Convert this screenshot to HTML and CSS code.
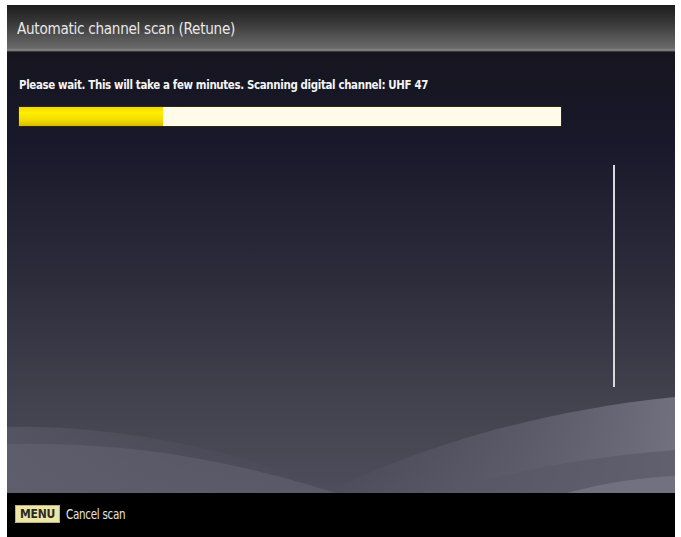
FILE: index.html
```html
<!DOCTYPE html>
<html>
<head>
<meta charset="utf-8">
<link rel="stylesheet" href="styles.css">
</head>
<body>
<div class="screen">
  <div class="titlebar"><span class="title">Automatic channel scan (Retune)</span></div>
  <div class="content">
    <svg class="waves" viewBox="0 0 668 441" preserveAspectRatio="none" aria-hidden="true">
      <defs>
        <linearGradient id="w1" x1="0" y1="0" x2="1" y2="0">
          <stop offset="0" stop-color="#6a6a78" stop-opacity="0.0"/>
          <stop offset="0.5" stop-color="#6e6d7c" stop-opacity="0.45"/>
          <stop offset="1" stop-color="#7c7b8a" stop-opacity="0.8"/>
        </linearGradient>
        <linearGradient id="w2" x1="0" y1="0" x2="1" y2="0">
          <stop offset="0" stop-color="#5a5a68" stop-opacity="0.7"/>
          <stop offset="0.6" stop-color="#5a5a68" stop-opacity="0.2"/>
          <stop offset="1" stop-color="#5a5a68" stop-opacity="0"/>
        </linearGradient>
      </defs>
      <path d="M0 375 C120 372 260 405 320 441 L0 441 Z" fill="url(#w2)"/>
      <path d="M0 392 C150 388 260 420 330 441 L0 441 Z" fill="#666674" opacity="0.5"/>
      <path d="M320 441 C400 400 520 360 668 345 L668 441 Z" fill="url(#w1)"/>
      <path d="M430 441 C500 420 580 405 668 398 L668 441 Z" fill="#585766" opacity="0.65"/>
      <path d="M560 441 C600 430 640 425 668 424 L668 441 Z" fill="#767584" opacity="0.8"/>
    </svg>
    <div class="main">
      <p class="message">Please wait. This will take a few minutes. Scanning digital channel: UHF 47</p>
      <div class="progress"><div class="fill" style="width:26.6%"></div></div>
    </div>
    <div class="side"><div class="vline"></div></div>
  </div>
  <div class="footer">
    <span class="key">MENU</span><span class="action">Cancel scan</span>
  </div>
</div>
</body>
</html>
```
FILE: styles.css
```css
html, body {
  margin: 0;
  padding: 0;
  background: #ffffff;
}
.screen {
  margin: 5px 6px 0 7px;
  width: 668px;
  height: 532px;
  display: grid;
  grid-template-rows: 47px 1fr 44px;
  font-family: "DejaVu Sans Condensed", "DejaVu Sans", sans-serif;
  color: #f2f2f2;
  overflow: hidden;
}
.titlebar {
  background: linear-gradient(to bottom, #1c1c1c 0%, #3a3a3a 40%, #6a6a6a 92%, #8a8a8a 96%, #202020 100%);
  display: flex;
  align-items: center;
  padding-left: 10px;
}
.title {
  font-size: 16px;
  letter-spacing: -0.3px;
  color: #e8e8e8;
  transform: scaleX(0.945);
  transform-origin: left center;
  white-space: nowrap;
}
.content {
  position: relative;
  background: linear-gradient(to bottom, #16151f 0%, #18182a 20%, #2c2b3a 50%, #43424f 80%, #4e4d5b 100%);
  display: grid;
  grid-template-columns: 1fr 62px;
}
.waves {
  position: absolute;
  left: 0;
  top: 0;
  width: 100%;
  height: 100%;
}
.main {
  position: relative;
  padding: 25px 0 0 12px;
}
.message {
  margin: 0;
  font-size: 12.5px;
  font-weight: bold;
  letter-spacing: -0.4px;
  color: #f4f4f4;
  white-space: nowrap;
  transform: scaleX(0.915);
  transform-origin: left center;
  line-height: 15px;
}
.progress {
  margin-top: 15px;
  width: 542px;
  height: 19px;
  background: #fffbe8;
  box-shadow: 0 0 0 1px #2a2810;
}
.fill {
  height: 100%;
  background: linear-gradient(to bottom, #f3d800 0%, #ffef00 30%, #f0dc00 70%, #d8b800 100%);
}
.side {
  position: relative;
  padding-top: 113px;
}
.vline {
  width: 2px;
  height: 222px;
  background: #d8d8de;
}
.footer {
  background: #000000;
  display: flex;
  align-items: center;
  padding-left: 8px;
  padding-bottom: 2px;
}
.key {
  background: #ece6a8;
  color: #2a2a20;
  font-size: 12px;
  font-weight: bold;
  padding: 1px 4px;
  border: 1px solid #b9b27a;
  letter-spacing: -0.2px;
}
.action {
  margin-left: 6px;
  font-size: 13.5px;
  color: #e6e6e6;
  transform: scaleX(0.85);
  transform-origin: left center;
  letter-spacing: -0.3px;
}
```
